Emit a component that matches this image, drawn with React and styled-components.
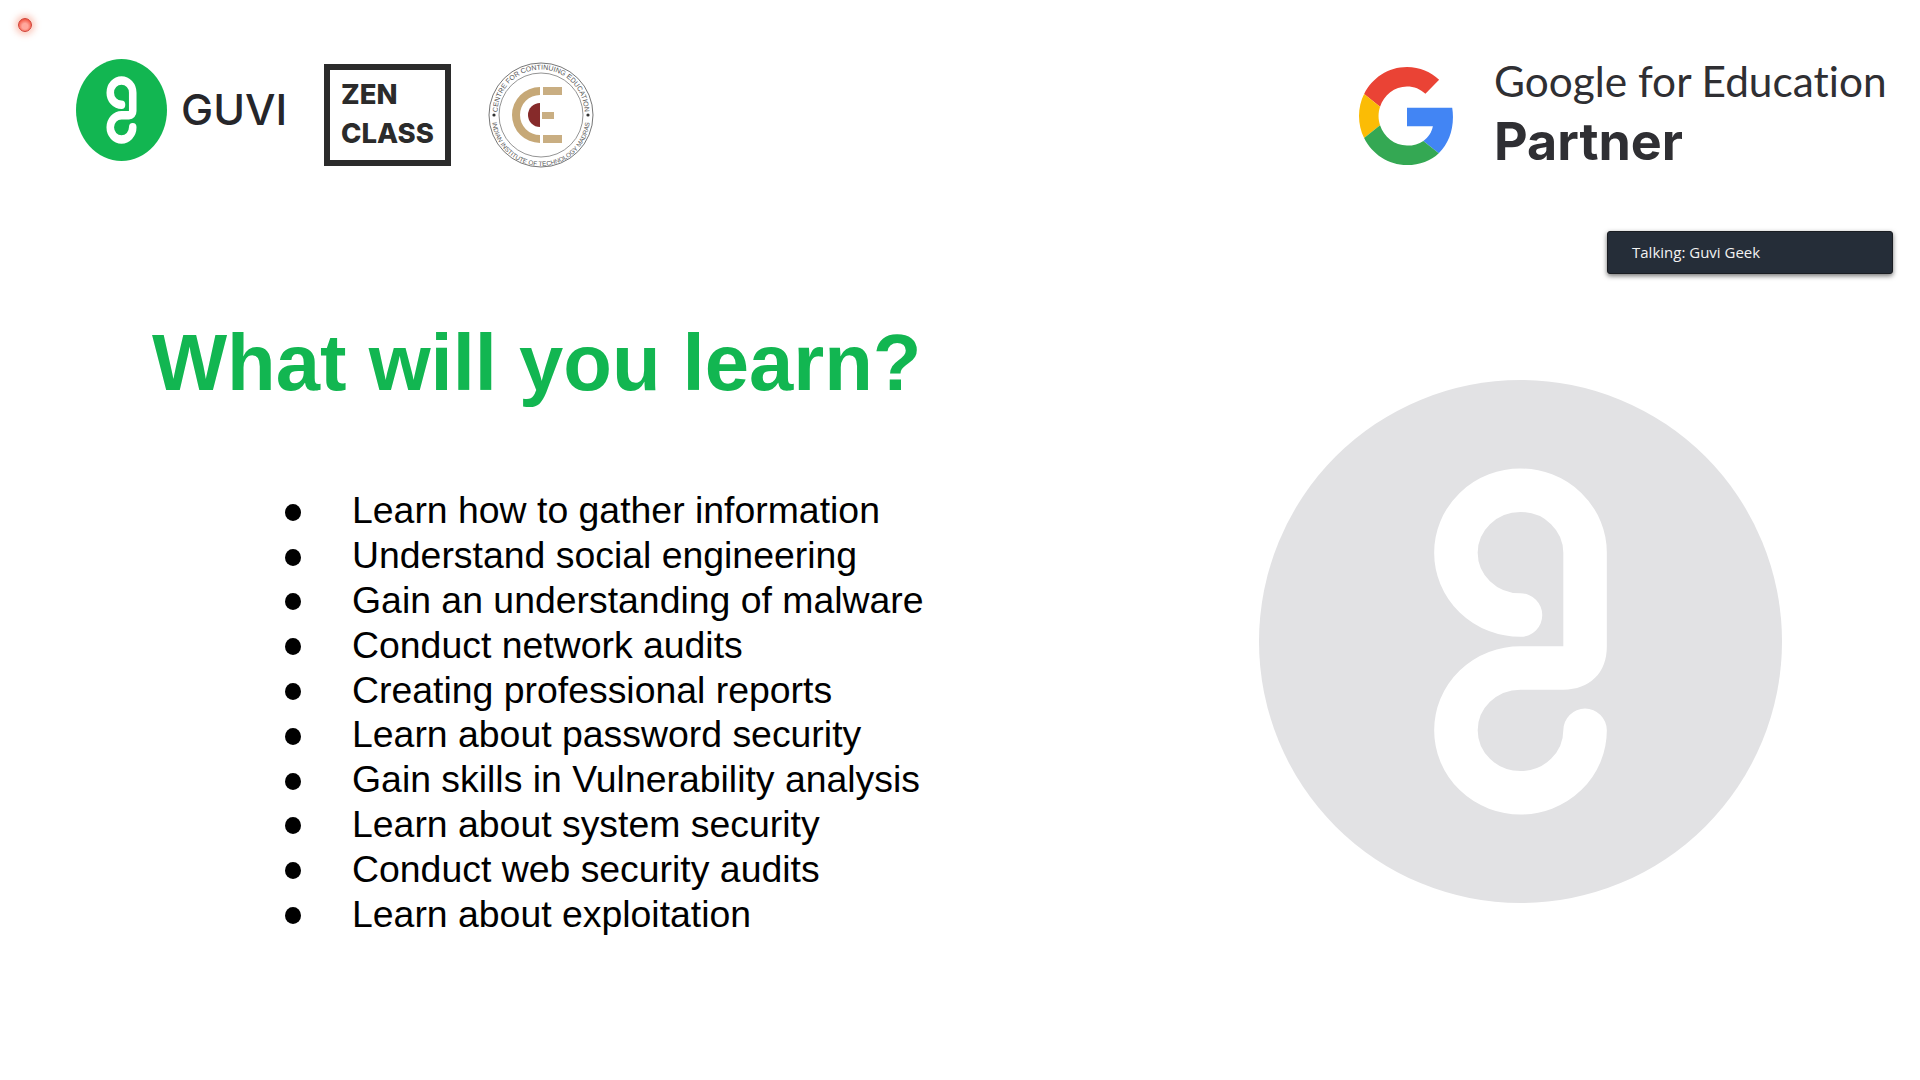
import React from "react";
import styled, { createGlobalStyle } from "styled-components";

const Global = createGlobalStyle`
  html, body { margin: 0; padding: 0; background: #fff; }
  body { font-family: "Liberation Sans", Arial, sans-serif; }
`;

const topics = [
  "Learn how to gather information",
  "Understand social engineering",
  "Gain an understanding of malware",
  "Conduct network audits",
  "Creating professional reports",
  "Learn about password security",
  "Gain skills in Vulnerability analysis",
  "Learn about system security",
  "Conduct web security audits",
  "Learn about exploitation",
];

// same g mark for the small green logo and the big grey one
const GuviMark = ({ className, bg }) => (
  <svg className={className} viewBox="-733 -733 1466 1466" preserveAspectRatio="none">
    <circle cx="0" cy="0" r="733" fill={bg} />
    <path
      d="M0 -74 A181 175 0 1 1 181 -249 L181 13 Q181 74 120 74 L0 74 A181 175 0 1 0 181 249"
      fill="none"
      stroke="#fff"
      strokeWidth="122"
      strokeLinecap="round"
      strokeLinejoin="round"
    />
  </svg>
);

const GoogleG = ({ className }) => (
  <svg className={className} viewBox="0 0 48 48" preserveAspectRatio="none">
    <path fill="#EA4335" d="M24 9.5c3.54 0 6.71 1.22 9.21 3.6l6.85-6.85C35.9 2.38 30.47 0 24 0 14.62 0 6.51 5.38 2.56 13.22l7.98 6.19C12.43 13.72 17.74 9.5 24 9.5z" />
    <path fill="#4285F4" d="M46.98 24.55c0-1.57-.15-3.09-.38-4.55H24v9.02h12.94c-.58 2.96-2.26 5.48-4.78 7.18l7.73 6c4.51-4.18 7.09-10.36 7.09-17.65z" />
    <path fill="#FBBC05" d="M10.53 28.59c-.48-1.45-.76-2.99-.76-4.59s.27-3.14.76-4.59l-7.98-6.19C.92 16.46 0 20.12 0 24c0 3.88.92 7.54 2.56 10.78l7.97-6.19z" />
    <path fill="#34A853" d="M24 48c6.48 0 11.93-2.13 15.89-5.81l-7.73-6c-2.15 1.45-4.92 2.3-8.16 2.3-6.26 0-11.57-4.22-13.47-9.91l-7.98 6.19C6.51 42.62 14.62 48 24 48z" />
  </svg>
);

const CceSeal = ({ className }) => (
  <svg className={className} viewBox="0 0 106 106">
    <defs>
      <path id="sealTop" d="M9.5 51 A43.5 43.5 0 0 1 96.5 51" />
      <path id="sealBottom" d="M4 55 A49 49 0 0 0 102 55" />
    </defs>
    <circle cx="53" cy="53" r="52" fill="#fff" stroke="#666" strokeWidth="0.9" />
    <circle cx="53" cy="53" r="42" fill="none" stroke="#666" strokeWidth="0.7" />
    <text fontFamily="Liberation Sans, sans-serif" fontSize="7" fill="#555">
      <textPath href="#sealTop" startOffset="50%" textAnchor="middle">CENTRE FOR CONTINUING EDUCATION</textPath>
    </text>
    <text fontFamily="Liberation Sans, sans-serif" fontSize="6.4" fill="#555">
      <textPath href="#sealBottom" startOffset="50%" textAnchor="middle">INDIAN INSTITUTE OF TECHNOLOGY MADRAS</textPath>
    </text>
    <circle cx="6" cy="53" r="1.6" fill="#333" />
    <circle cx="100" cy="53" r="1.6" fill="#333" />
    <path d="M52 25 A28 28 0 0 0 52 81 V73 A20 20 0 0 1 52 33 Z" fill="#c6a877" />
    <path d="M55 25 H74 V33 H55 Z M55 73 H74 V81 H55 Z M54 50 H66 V57 H54 Z" fill="#c9ae82" />
    <path d="M52 41 A12 12 0 0 0 52 65 Z" fill="#862a2a" />
  </svg>
);

const App = () => (
  <Slide>
    <Global />
    <RecDot />
    <Header>
      <LogoGroup>
        <GreenMark bg="#12b651" />
        <GuviName>GUVI</GuviName>
        <ZenBox>
          <span>ZEN</span>
          <span>CLASS</span>
        </ZenBox>
        <Seal />
      </LogoGroup>
      <Partner>
        <PartnerG />
        <PartnerText>
          <PartnerTop>Google for Education</PartnerTop>
          <PartnerBottom>Partner</PartnerBottom>
        </PartnerText>
      </Partner>
    </Header>
    <TalkingTag>Talking: Guvi Geek</TalkingTag>
    <Body>
      <LeftColumn>
        <Title>What will you learn?</Title>
        <TopicList>
          {topics.map((t) => (
            <Topic key={t}>{t}</Topic>
          ))}
        </TopicList>
      </LeftColumn>
      <GreyMark bg="#e2e2e4" />
    </Body>
  </Slide>
);

export default App;

const Slide = styled.div`
  position: relative;
  width: 1920px;
  height: 1080px;
  overflow: hidden;
  background: #fff;
`;

const RecDot = styled.div`
  position: absolute;
  left: 18px;
  top: 18px;
  width: 14px;
  height: 14px;
  box-sizing: border-box;
  border: 1px solid #cf4034;
  border-radius: 50%;
  background: radial-gradient(circle at 50% 60%, #ffa79c 0 30%, #f4604e 70%, #e0483c 100%);
  box-shadow: 0 0 6px 3px rgba(245, 120, 90, 0.4);
`;

const Header = styled.div`
  display: flex;
  justify-content: space-between;
  align-items: flex-start;
  height: 222px;
  padding: 59px 33px 0 76px;
  box-sizing: border-box;
`;

const LogoGroup = styled.div`
  display: flex;
  align-items: flex-start;
`;

const GreenMark = styled(GuviMark)`
  width: 91px;
  height: 102px;
`;

const GuviName = styled.div`
  margin: 23px 0 0 14px;
  width: 111px;
  font-family: "Inter", sans-serif;
  font-weight: 500;
  font-size: 43px;
  line-height: 54px;
  color: #26262a;
`;

const ZenBox = styled.div`
  display: flex;
  flex-direction: column;
  gap: 9px;
  width: 127px;
  height: 102px;
  margin: 5px 0 0 32px;
  padding: 9px 0 0 11px;
  box-sizing: border-box;
  border: 6px solid #2b2b2b;
  font-family: "Inter", sans-serif;
  font-weight: 800;
  font-size: 27.5px;
  line-height: 30px;
  color: #2b2b2b;
`;

const Seal = styled(CceSeal)`
  width: 106px;
  height: 106px;
  margin: 3px 0 0 37px;
`;

const Partner = styled.div`
  display: flex;
  align-items: flex-start;
  gap: 39px;
`;

const PartnerG = styled(GoogleG)`
  width: 96px;
  height: 98px;
  margin-top: 8px;
`;

const PartnerText = styled.div`
  display: flex;
  flex-direction: column;
  width: 393px;
  color: #2f2f33;
`;

const PartnerTop = styled.div`
  margin-top: -1px;
  font-family: "Lato", sans-serif;
  font-size: 42.4px;
  font-variant-ligatures: none;
  line-height: 46px;
  white-space: nowrap;
`;

const PartnerBottom = styled.div`
  margin-top: 10px;
  font-family: "Inter", sans-serif;
  font-weight: 700;
  font-size: 52px;
  line-height: 56px;
`;

const TalkingTag = styled.div`
  position: absolute;
  left: 1607px;
  top: 231px;
  width: 286px;
  height: 43px;
  box-sizing: border-box;
  padding-left: 24px;
  border: 1px solid #1a1d22;
  border-radius: 3px;
  background: #252d38;
  box-shadow: 0 2px 5px rgba(0, 0, 0, 0.55);
  font-family: "Open Sans", sans-serif;
  font-size: 15px;
  line-height: 41px;
  color: #f2f2f2;
`;

const Body = styled.div`
  display: flex;
  justify-content: space-between;
  align-items: flex-start;
  padding: 0 138px 0 152px;
`;

const LeftColumn = styled.div`
  display: flex;
  flex-direction: column;
`;

const Title = styled.h1`
  margin: 95px 0 0;
  font-family: "Liberation Sans", Arial, sans-serif;
  font-weight: 700;
  font-size: 79.6px;
  line-height: 92px;
  color: #12b651;
`;

const TopicList = styled.ul`
  display: flex;
  flex-direction: column;
  margin: 79.5px 0 0 133px;
  padding: 0;
  list-style: none;
`;

const Topic = styled.li`
  display: flex;
  align-items: center;
  gap: 51px;
  height: 44.8px;
  font-size: 37.4px;
  color: #000;

  &::before {
    content: "";
    width: 16px;
    height: 17px;
    margin-top: 3px;
    border-radius: 50%;
    background: #000;
  }
`;

const GreyMark = styled(GuviMark)`
  width: 523px;
  height: 523px;
  margin-top: 158px;
`;
